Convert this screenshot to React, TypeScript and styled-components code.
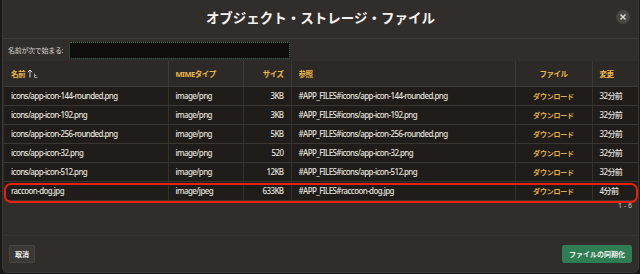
import React from "react";
import styled, { createGlobalStyle } from "styled-components";

const Global = createGlobalStyle`
  html, body { margin: 0; padding: 0; background: #1b1917; }
  body { width: 640px; height: 274px; overflow: hidden; font-family: "Noto Sans", "Noto Sans CJK JP", sans-serif; }
`;

const Dialog = styled.div`
  box-sizing: border-box;
  width: 637px;
  height: 273px;
  margin: 0 1px 0 2px;
  background: #312d2a;
  border: 1px solid #3b3733;
  border-top: none;
  border-radius: 0 0 6px 6px;
  display: flex;
  flex-direction: column;
  color: #e6e2de;
`;

const TitleBar = styled.div`
  height: 38px;
  flex: none;
  display: flex;
  align-items: center;
  justify-content: center;
  position: relative;
  border-bottom: 1px solid #3e3a36;
`;

const Title = styled.h1`
  margin: 0 0 4px;
  font-family: "Noto Sans CJK JP", sans-serif;
  font-size: 13.5px;
  font-weight: 700;
  color: #f4f2f0;
`;

const CloseBtn = styled.button`
  position: absolute;
  right: 8px;
  top: 10px;
  width: 14px;
  height: 14px;
  border-radius: 50%;
  border: none;
  padding: 0;
  background: #4a4642;
  display: flex;
  align-items: center;
  justify-content: center;
`;

const FilterRow = styled.div`
  height: 22px;
  flex: none;
  display: flex;
  align-items: center;
  gap: 6px;
  padding: 0 5px;
`;

const Label = styled.label`
  font-family: "Noto Sans CJK JP", sans-serif;
  font-size: 7px;
  letter-spacing: -0.3px;
  color: #d8d4d0;
`;

const Input = styled.div`
  width: 219px;
  height: 15px;
  background: #0f0e0d;
  border: 1px dotted #4d7a5c;
  border-radius: 2px;
`;

const TableWrap = styled.div`
  padding: 0 1px;
  position: relative;
`;

const Table = styled.table`
  width: 100%;
  border-collapse: collapse;
  table-layout: fixed;
`;

const Th = styled.th<{ $align?: string; $w: number }>`
  width: ${(p) => p.$w}px;
  height: 25px;
  box-sizing: border-box;
  padding: 0 7px;
  font-size: 7.5px;
  letter-spacing: -0.5px;
  text-align: ${(p) => p.$align || "left"};
  color: #e9b84b;
  font-weight: 700;
  background: #2d2926;
  border-left: 1px solid #3e3a36;
  border-bottom: 1px solid #3e3a36;
  &:first-child { border-left: none; }
`;

const Td = styled.td<{ $align?: string; $link?: boolean }>`
  height: 18px;
  padding: 0 7px;
  text-align: ${(p) => p.$align || "left"};
  color: ${(p) => (p.$link ? "#e2b24a" : "#e6e2de")};
  font-weight: ${(p) => (p.$link ? 700 : 500)};
  font-size: ${(p) => (p.$link ? "7px" : "8px")};
  letter-spacing: ${(p) => (p.$link ? "-0.2px" : "-0.6px")};
  background: #1f1c1a;
  border-left: 1px solid #35312d;
  border-bottom: 1px solid #3a3632;
  white-space: nowrap;
  overflow: hidden;
  &:first-child { border-left: none; }
`;

const Highlight = styled.div`
  position: absolute;
  left: 1px;
  right: 0px;
  bottom: -2px;
  height: 16px;
  border: 2px solid #e8200e;
  border-radius: 7px;
  pointer-events: none;
`;

const Pager = styled.div`
  text-align: right;
  font-size: 7px;
  color: #cfcbc7;
  padding: 0 6px 0 0;
`;

const Spacer = styled.div`
  flex: 1;
`;

const Footer = styled.div`
  flex: none;
  height: 37px;
  border-top: 1px solid #3a3632;
  display: flex;
  align-items: flex-start;
  justify-content: space-between;
  padding: 9px 6px 0 6px;
  box-sizing: border-box;
`;

const Button = styled.button<{ $primary?: boolean }>`
  height: 18px;
  padding: 0 ${(p) => (p.$primary ? 6 : 5)}px;
  border-radius: 2px;
  font-family: "Noto Sans CJK JP", sans-serif;
  font-size: 7px;
  font-weight: 700;
  color: #f2f0ee;
  background: ${(p) => (p.$primary ? "#2f7d52" : "#3c3835")};
  border: 1px solid ${(p) => (p.$primary ? "#2f7d52" : "#4a4643")};
`;

const SortIcon = () => (
  <svg width="12" height="9" viewBox="0 0 12 9" style={{ verticalAlign: "-1px", marginLeft: 2 }}>
    <path d="M3 8.5V1M0.8 3.2L3 1l2.2 2.2" stroke="#d8d4d0" strokeWidth="1" fill="none" />
    <path d="M7.5 4.5v4h3M7.5 6.5h2" stroke="#bdb9b5" strokeWidth="0.8" fill="none" />
  </svg>
);

const rows = [
  ["icons/app-icon-144-rounded.png", "image/png", "3KB", "#APP_FILES#icons/app-icon-144-rounded.png", "32分前"],
  ["icons/app-icon-192.png", "image/png", "3KB", "#APP_FILES#icons/app-icon-192.png", "32分前"],
  ["icons/app-icon-256-rounded.png", "image/png", "5KB", "#APP_FILES#icons/app-icon-256-rounded.png", "32分前"],
  ["icons/app-icon-32.png", "image/png", "520", "#APP_FILES#icons/app-icon-32.png", "32分前"],
  ["icons/app-icon-512.png", "image/png", "12KB", "#APP_FILES#icons/app-icon-512.png", "32分前"],
  ["raccoon-dog.jpg", "image/jpeg", "633KB", "#APP_FILES#raccoon-dog.jpg", "4分前"],
];

export default function App() {
  return (
    <>
      <Global />
      <Dialog>
        <TitleBar>
          <Title>オブジェクト・ストレージ・ファイル</Title>
          <CloseBtn aria-label="close">
            <svg width="8" height="8" viewBox="0 0 8 8">
              <path d="M1.5 1.5l5 5M6.5 1.5l-5 5" stroke="#e4e0dc" strokeWidth="1.4" />
            </svg>
          </CloseBtn>
        </TitleBar>
        <FilterRow>
          <Label>名前が次で始まる:</Label>
          <Input />
        </FilterRow>
        <TableWrap>
          <Table>
            <thead>
              <tr>
                <Th $w={164}>名前<SortIcon /></Th>
                <Th $w={75}>MIMEタイプ</Th>
                <Th $w={48} $align="right">サイズ</Th>
                <Th $w={224}>参照</Th>
                <Th $w={77} $align="center">ファイル</Th>
                <Th $w={46}>変更</Th>
              </tr>
            </thead>
            <tbody>
              {rows.map((r) => (
                <tr key={r[0]}>
                  <Td>{r[0]}</Td>
                  <Td>{r[1]}</Td>
                  <Td $align="right">{r[2]}</Td>
                  <Td>{r[3]}</Td>
                  <Td $align="center" $link>ダウンロード</Td>
                  <Td>{r[4]}</Td>
                </tr>
              ))}
            </tbody>
          </Table>
          <Highlight />
        </TableWrap>
        <Pager>1 - 6</Pager>
        <Spacer />
        <Footer>
          <Button>取消</Button>
          <Button $primary>ファイルの同期化</Button>
        </Footer>
      </Dialog>
    </>
  );
}
